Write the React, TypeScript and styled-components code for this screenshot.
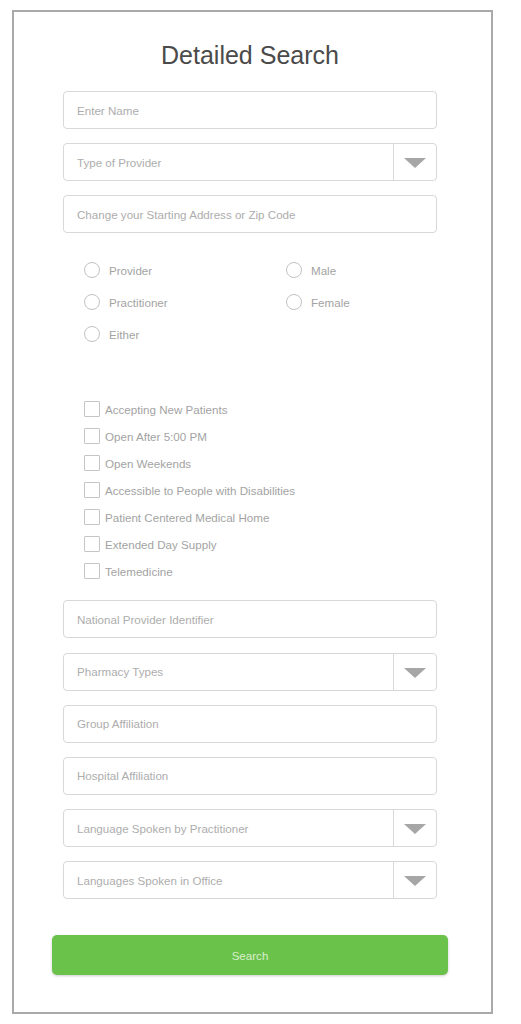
import styled, { createGlobalStyle } from 'styled-components';

//== style ==//
const GlobalStyle = createGlobalStyle`
    body {
        margin: 0;
        background: #ffffff;
        font-family: "Liberation Sans", Arial, sans-serif;
    }
`;

const Frame = styled.div`
    box-sizing: border-box;
    width: 481px;
    height: 1004px;
    margin: 10px 0 0 12px;
    border: 2px solid #a9a9a9;
    background: #fff;
`;

const Title = styled.h1`
    margin: 28px 0 0;
    height: 30px;
    line-height: 30px;
    text-align: center;
    font-size: 25px;
    font-weight: normal;
    color: #4a4a4a;
    padding-right: 5px;
`;

const Fields = styled.div<{ top: number }>`
    display: flex;
    flex-direction: column;
    gap: 14.2px;
    width: 374px;
    margin: ${props => props.top}px 0 0 49px;
`;

const Field = styled.div`
    box-sizing: border-box;
    display: flex;
    align-items: center;
    height: 38px;
    border: 1px solid #d8d8d8;
    border-radius: 4px;
    background: #fff;
`;

const Placeholder = styled.span`
    flex: 1;
    padding-left: 13px;
    font-size: 11.6px;
    color: #adadad;
`;

const ArrowBox = styled.div`
    display: flex;
    align-items: center;
    justify-content: center;
    width: 42px;
    height: 100%;
    border-left: 1px solid #d8d8d8;
`;

const Arrow = styled.div`
    width: 0;
    height: 0;
    border-left: 11px solid transparent;
    border-right: 11px solid transparent;
    border-top: 10px solid #a6a6a6;
    margin-top: 2px;
`;

const RadioGrid = styled.div`
    display: grid;
    grid-template-columns: 202px 172px;
    grid-auto-rows: 16px;
    row-gap: 16px;
    width: 374px;
    margin: 29px 0 0 49px;
`;

const RadioItem = styled.label`
    display: flex;
    align-items: center;
    gap: 9px;
    padding-left: 21px;
    font-size: 11.6px;
    color: #a3a3a3;
`;

const Circle = styled.span`
    box-sizing: border-box;
    width: 16px;
    height: 16px;
    border: 1.5px solid #c2c2c2;
    border-radius: 50%;
`;

const CheckList = styled.div`
    display: flex;
    flex-direction: column;
    gap: 11px;
    margin: 59px 0 0 70px;
`;

const CheckItem = styled.label`
    display: flex;
    align-items: center;
    gap: 5px;
    height: 16px;
    font-size: 11.6px;
    color: #a3a3a3;
`;

const Box = styled.span`
    box-sizing: border-box;
    width: 16px;
    height: 16px;
    border: 1.5px solid #c6c6c6;
    border-radius: 1px;
`;

const SearchButton = styled.button`
    display: block;
    width: 396px;
    height: 40px;
    margin: 36px 0 0 38px;
    border: none;
    border-radius: 5px;
    background: #6bc24b;
    box-shadow: 0 1px 3px rgba(0, 0, 0, 0.2);
    font-family: inherit;
    font-size: 11.6px;
    color: #d8efcd;
`;

//== component ==//
const InputField = ({ label, select }: { label: string, select?: boolean }) => (
    <Field>
        <Placeholder>{label}</Placeholder>
        {select && (
            <ArrowBox>
                <Arrow />
            </ArrowBox>
        )}
    </Field>
);

const Radio = ({ label }: { label: string }) => (
    <RadioItem>
        <Circle />
        {label}
    </RadioItem>
);

const checks = [
    'Accepting New Patients',
    'Open After 5:00 PM',
    'Open Weekends',
    'Accessible to People with Disabilities',
    'Patient Centered Medical Home',
    'Extended Day Supply',
    'Telemedicine',
];

export default function App() {
    return (
        <>
            <GlobalStyle />
            <Frame>
                <Title>Detailed Search</Title>
                <Fields top={21}>
                    <InputField label="Enter Name" />
                    <InputField label="Type of Provider" select />
                    <InputField label="Change your Starting Address or Zip Code" />
                </Fields>
                <RadioGrid>
                    <Radio label="Provider" />
                    <Radio label="Male" />
                    <Radio label="Practitioner" />
                    <Radio label="Female" />
                    <Radio label="Either" />
                </RadioGrid>
                <CheckList>
                    {checks.map(c => (
                        <CheckItem key={c}>
                            <Box />
                            {c}
                        </CheckItem>
                    ))}
                </CheckList>
                <Fields top={21}>
                    <InputField label="National Provider Identifier" />
                    <InputField label="Pharmacy Types" select />
                    <InputField label="Group Affiliation" />
                    <InputField label="Hospital Affiliation" />
                    <InputField label="Language Spoken by Practitioner" select />
                    <InputField label="Languages Spoken in Office" select />
                </Fields>
                <SearchButton>Search</SearchButton>
            </Frame>
        </>
    );
}
